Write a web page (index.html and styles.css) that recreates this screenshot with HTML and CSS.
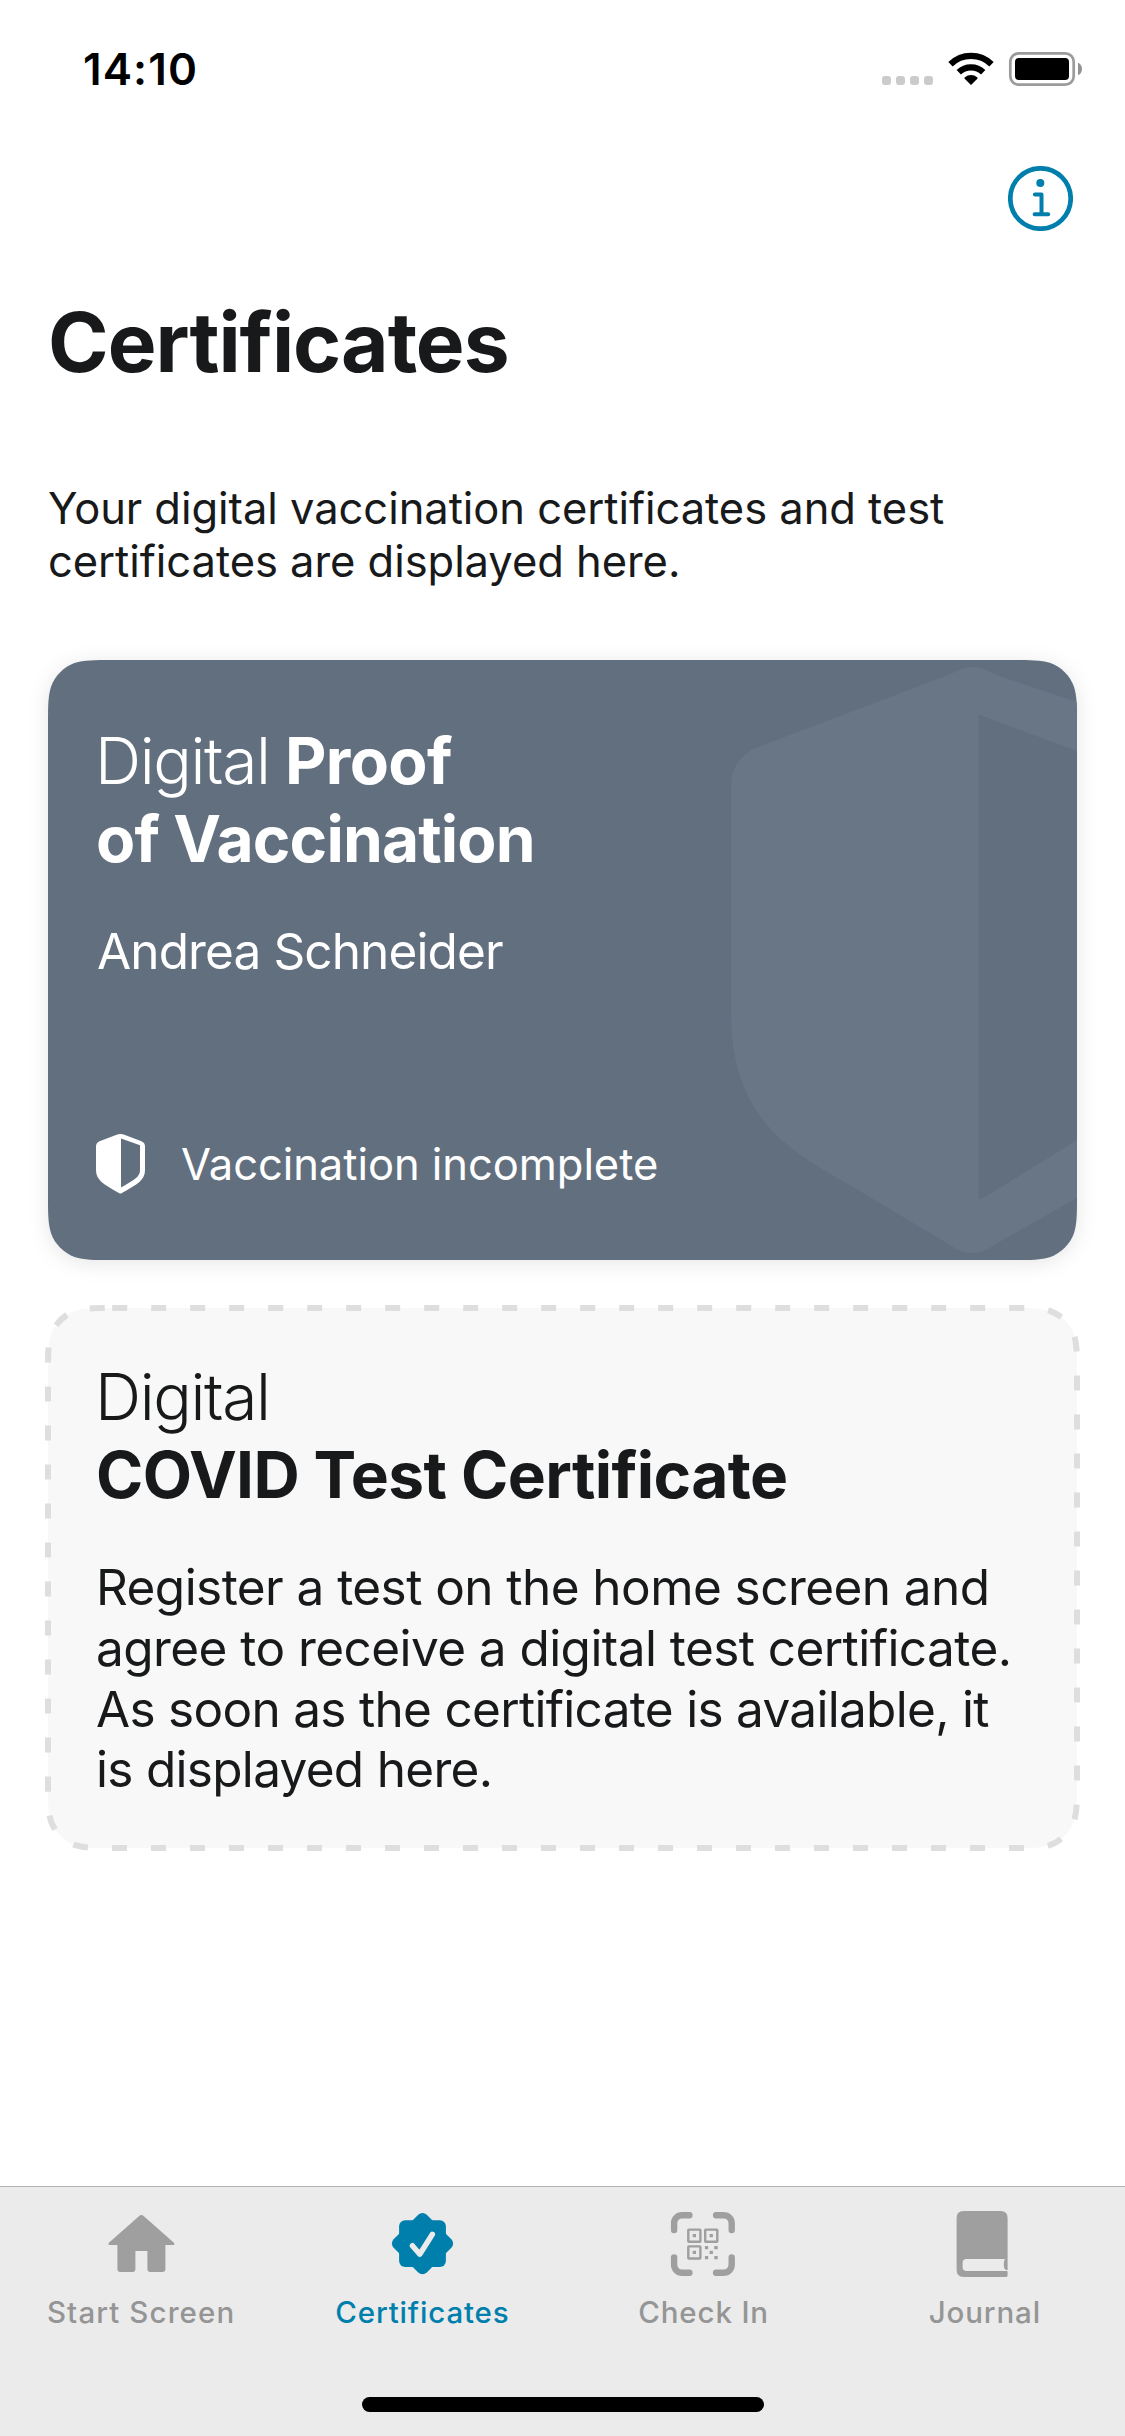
FILE: index.html
```html
<!DOCTYPE html>
<html lang="en">
<head>
<meta charset="utf-8">
<title>Certificates</title>
<link rel="stylesheet" href="styles.css">
</head>
<body>
<div class="screen">
  <header class="status-bar">
    <span class="time">14:10</span>
    <svg class="status-icons" width="202" height="36" viewBox="881 51 202 36" aria-hidden="true">
      <g fill="#cbcbcb">
        <rect x="882" y="76" width="9" height="9" rx="3"/>
        <rect x="896" y="76" width="9" height="9" rx="3"/>
        <rect x="910" y="76" width="9" height="9" rx="3"/>
        <rect x="924" y="76" width="9" height="9" rx="3"/>
      </g>
      <path d="M971 85l-6.3-6.2q-.8-.9.2-1.6a10 10 0 0 1 12.2 0q1 .7.2 1.6z"/>
      <g fill="none" stroke="#000" stroke-width="6.2">
        <path d="M958.8 72.300A17.500 17.500 0 0 1 983.200 72.300"/>
        <path d="M950.500 64.200A29.300 29.300 0 0 1 991.500 64.200"/>
      </g>
      <rect x="1010.300" y="53.300" width="63.400" height="31.400" rx="8.500" fill="none" stroke="#9b9b9b" stroke-width="2.700"/>
      <rect x="1015" y="58" width="54" height="22" rx="4"/>
      <path d="M1078 62.800q4 1.800 4 6.200t-4 6.200z" fill="#929292"/>
    </svg>
  </header>

  <div class="toolbar">
    <svg width="65" height="65" viewBox="0 0 65 65" role="img" aria-label="Information">
      <circle cx="32.500" cy="32.500" r="30.200" fill="none" stroke="#007fad" stroke-width="4.700"/>
      <circle cx="32.300" cy="17" r="4" fill="#007fad"/>
      <path d="M26.900 28.400h6.600v19.600M26.600 48.200h13.600" fill="none" stroke="#007fad" stroke-width="4" stroke-linecap="round" stroke-linejoin="round"/>
    </svg>
  </div>

  <main class="content">
    <h1>Certificates</h1>
    <p class="intro">Your digital vaccination certificates and test<br>certificates are displayed here.</p>

    <section class="card card-proof">
      <svg class="card-bg" width="1029" height="600" viewBox="0 0 1029 600" aria-hidden="true">
        <defs>
          <clipPath id="proof-shape">
            <path d="M64.200 0H964.800C983.300 0 992.500 0 1002.500 3.100C1013.300 7.100 1021.900 15.700 1025.900 26.500C1029 36.500 1029 45.700 1029 64.200V535.800C1029 554.300 1029 563.500 1025.900 573.500C1021.900 584.300 1013.300 592.900 1002.500 596.900C992.500 600 983.300 600 964.800 600H64.200C45.700 600 36.500 600 26.500 596.900C15.700 592.900 7.100 584.300 3.100 573.500C0 563.500 0 554.300 0 535.800V64.200C0 45.700 0 36.500 3.100 26.500C7.100 15.700 15.700 7.100 26.500 3.100C36.500 0 45.700 0 64.200 0Z"/>
          </clipPath>
        </defs>
        <g clip-path="url(#proof-shape)">
          <rect width="1029" height="600" fill="#626f7f"/>
          <path fill="#697686" fill-rule="evenodd" d="M898 16C909 11.500 914 7 925 7S940 11.500 951 16L1140 79Q1165 88 1165 127V365C1165 460 1110 497 1029 538L946 585Q924 601 902 585L800 524C735 487 683 455 683 351V127Q683 98 710 87ZM930.500 54.500V539.500Q935 538.500 942 534L1029 480Q1112 430 1112 365V122L1029 91Z"/>
        </g>
      </svg>
      <h2><span class="light">Digital</span> <span class="proof">Proof</span><br>of Vaccination</h2>
      <p class="name">Andrea Schneider</p>
      <div class="status">
        <svg width="49" height="60" viewBox="0 0 49 60" aria-hidden="true">
          <path fill="#fff" fill-rule="evenodd" d="M20 1Q24.500-.9 29 1L45.500 7.200Q49 8.800 49 12.500V36C49 46 42 50 25.500 59.200Q24.400 59.700 23.300 59.200C7 50 0 46 0 36V12.500Q0 8.800 3.500 7.200ZM25 4.400V53.400C39 45.500 44 43 44 36V11.200Z"/>
        </svg>
        <span>Vaccination incomplete</span>
      </div>
    </section>

    <section class="card card-test">
      <svg class="card-bg" width="1029" height="540" viewBox="0 0 1029 540" aria-hidden="true">
        <path fill="#f8f8f8" stroke="#dedede" stroke-width="6" stroke-dasharray="15 24" d="M64.200 0H964.800C983.300 0 992.500 0 1002.500 3.100C1013.300 7.100 1021.900 15.700 1025.900 26.500C1029 36.500 1029 45.700 1029 64.200V475.800C1029 494.300 1029 503.500 1025.900 513.500C1021.900 524.300 1013.300 532.900 1002.500 536.900C992.500 540 983.300 540 964.800 540H64.200C45.700 540 36.500 540 26.500 536.900C15.700 532.900 7.100 524.300 3.100 513.500C0 503.500 0 494.300 0 475.800V64.200C0 45.700 0 36.500 3.100 26.500C7.100 15.700 15.700 7.100 26.500 3.100C36.500 0 45.700 0 64.200 0Z"/>
      </svg>
      <h2><span class="light">Digital</span><br><span class="covid">COVID Test Certificate</span></h2>
      <p class="hint">Register a test on the home screen and<br>agree to receive a digital test certificate.<br><span class="tight">As soon as the certificate is available, it<br>is displayed here.</span></p>
    </section>
  </main>

  <footer class="tab-bar">
    <nav class="tabs">
      <a class="tab">
        <svg width="72" height="72" viewBox="0 0 72 72" aria-hidden="true">
          <path d="M33.900 9.300Q36.400 6.900 38.900 9.300L68.900 35.700Q70.200 38 67.900 38H60.400V62Q60.400 65 57.400 65H45.400Q42.400 65 42.400 62V44H30.400V62Q30.400 65 27.400 65H15.400Q12.400 65 12.400 62V38H4.900Q2.600 38 3.900 35.700Z"/>
        </svg>
        <span class="wide">Start Screen</span>
      </a>
      <a class="tab active">
        <svg width="72" height="72" viewBox="0 0 72 72" aria-hidden="true">
          <rect x="13.100" y="13.200" width="46.800" height="46.800" rx="6"/>
          <rect x="13.100" y="13.200" width="46.800" height="46.800" rx="6" transform="rotate(45 36.500 36.600)"/>
          <path d="M26.400 38.700l7.400 8.600 12.600-20" fill="none" stroke="#ebebeb" stroke-width="5.400" stroke-linecap="round" stroke-linejoin="round"/>
        </svg>
        <span>Certificates</span>
      </a>
      <a class="tab">
        <svg width="72" height="72" viewBox="0 0 72 72" aria-hidden="true">
          <path d="M22.400 8.200H15.100a8 8 0 0 0-8 8V23.100M49.100 8.200H56.700a8 8 0 0 1 8 8V23.100M64.700 50.500V57.800a8 8 0 0 1-8 8H49.100M22.400 65.800H15.100a8 8 0 0 1-8-8V50.500" fill="none" stroke="#9f9f9f" stroke-width="6.400" stroke-linecap="round"/>
          <g fill="none" stroke="#9f9f9f" stroke-width="2.400">
            <rect x="21.300" y="22.600" width="12.100" height="12.100" rx=".5"/>
            <rect x="38.200" y="22.600" width="12.100" height="12.100" rx=".5"/>
            <rect x="21.300" y="39.400" width="12.100" height="12.100" rx=".5"/>
          </g>
          <path d="M25.700 27h3.300v3.300h-3.300zM42.600 27h3.300v3.300h-3.300zM25.700 43.800h3.300v3.300h-3.300zM37.900 39h3.300v3.300h-3.300zM47.300 39h3.400v3.300h-3.400zM42.600 43.800h3.300v3.300h-3.300zM37.900 48.900h3.300v3.300h-3.300zM47.300 48.900h3.400v3.300h-3.400z"/>
        </svg>
        <span>Check In</span>
      </a>
      <a class="tab">
        <svg width="72" height="72" viewBox="0 0 72 72" aria-hidden="true">
          <path d="M15.600 4H52.600Q59.600 4 59.600 11V63H58.800Q57.500 63 56.800 62Q54.600 57.500 56.900 52H18.600Q14.600 52 14.600 56V60Q14.600 64 18.600 64H59.200Q59.600 64.400 59.600 65V68.600Q59.600 70 58.200 70H15.600Q8.600 70 8.600 63V11Q8.600 4 15.600 4Z"/>
        </svg>
        <span>Journal</span>
      </a>
    </nav>
    <div class="home-indicator"></div>
  </footer>
</div>
</body>
</html>
```
FILE: styles.css
```css
* {
  box-sizing: border-box;
}

body {
  margin: 0;
  background: #fff;
  color: #17191a;
  font-family: Inter, "Liberation Sans", sans-serif;
}

h1,
h2,
p {
  margin: 0;
}

.screen {
  display: flex;
  flex-direction: column;
  width: 1125px;
  height: 2436px;
}

.status-bar {
  display: flex;
  justify-content: space-between;
  align-items: flex-start;
  height: 132px;
  padding: 39px 42px 0 83px;
  color: #000;
}

.time {
  font-size: 44px;
  line-height: 60px;
  font-weight: 600;
  letter-spacing: 1.1px;
}

.status-icons {
  margin-top: 12px;
}

.toolbar {
  display: flex;
  justify-content: flex-end;
  height: 161px;
  padding: 34px 52px 0 0;
}

.content {
  display: flex;
  flex-direction: column;
  flex: 1;
  padding: 0 48px;
}

h1 {
  font-size: 82px;
  line-height: 100px;
  font-weight: 700;
  letter-spacing: -1.03px;
}

.intro {
  margin-top: 89px;
  font-size: 43.5px;
  line-height: 53px;
  letter-spacing: -0.05px;
  white-space: nowrap;
}

.card {
  position: relative;
  display: flex;
  flex-direction: column;
  padding: 0 48px;
}

.card > :not(.card-bg) {
  position: relative;
}

.card-bg {
  position: absolute;
  inset: 0;
  overflow: visible;
}

.card-proof {
  height: 600px;
  margin-top: 72px;
  padding-top: 62px;
  color: #fff;
}

.card-proof .card-bg {
  filter: drop-shadow(0 3px 10px rgba(0, 0, 0, 0.1));
}

.card-test {
  height: 540px;
  margin-top: 48px;
  padding-top: 50px;
}

h2 {
  font-size: 64px;
  line-height: 78px;
  font-weight: 700;
  letter-spacing: -0.85px;
  white-space: nowrap;
}

.light {
  margin-left: -1px;
  font-weight: 300;
  letter-spacing: -1.35px;
}

.covid,
.proof {
  letter-spacing: -0.6px;
}

.proof {
  margin-left: 1px;
}

.name {
  margin-top: 43px;
  padding-left: 1px;
  font-size: 49.5px;
  line-height: 61px;
  letter-spacing: -0.88px;
}

.status {
  display: flex;
  align-items: center;
  gap: 36px;
  margin-top: 152px;
  font-size: 43.5px;
  line-height: 54px;
  letter-spacing: -0.05px;
}

.hint {
  margin-top: 43px;
  font-size: 49.5px;
  line-height: 60.8px;
  letter-spacing: -0.56px;
  white-space: nowrap;
}

.tight {
  letter-spacing: -0.7px;
}

.tab-bar {
  display: flex;
  flex-direction: column;
  justify-content: space-between;
  align-items: center;
  height: 250px;
  padding-bottom: 24px;
  border-top: 1px solid #b2b2b2;
  background: #ebebeb;
}

.tabs {
  display: grid;
  grid-template-columns: repeat(4, 1fr);
  width: 100%;
  padding-top: 20px;
}

.tab {
  display: flex;
  flex-direction: column;
  align-items: center;
  gap: 15px;
  fill: #9f9f9f;
  color: #959595;
  font-size: 29.5px;
  line-height: 36px;
  font-weight: 450;
  letter-spacing: 0.85px;
}

.tab span {
  padding-left: 1px;
}

.tab.active {
  fill: #007fad;
  color: #007fad;
}

.tab .wide {
  letter-spacing: 1.1px;
}

.home-indicator {
  width: 402px;
  height: 15px;
  border-radius: 7.5px;
  background: #000;
}
```
